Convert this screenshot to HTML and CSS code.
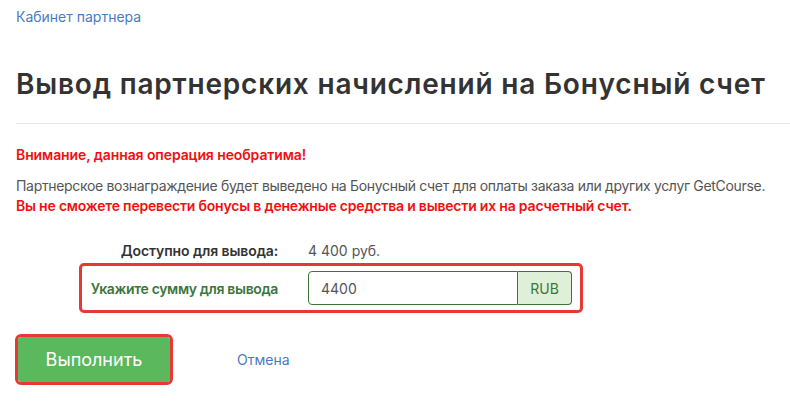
FILE: index.html
```html
<!DOCTYPE html>
<html lang="ru">
<head>
<meta charset="utf-8">
<link rel="stylesheet" href="styles.css">
</head>
<body>
<div class="page">
  <div class="crumbs"><a href="#">Кабинет партнера</a></div>
  <h1 class="title">Вывод партнерских начислений на Бонусный счет</h1>
  <hr class="sep">
  <p class="warn">Внимание, данная операция необратима!</p>
  <p class="info">Партнерское вознаграждение будет выведено на Бонусный счет для оплаты заказа или других услуг GetCourse.<br><span class="warn-inline">Вы не сможете перевести бонусы в денежные средства и вывести их на расчетный счет.</span></p>
  <div class="form">
    <div class="row avail">
      <div class="lbl">Доступно для вывода:</div>
      <div class="val">4 400 руб.</div>
    </div>
    <div class="box">
      <div class="row">
        <div class="lbl success">Укажите сумму для вывода</div>
        <div class="group">
          <input class="amount" type="text" value="4400">
          <span class="addon">RUB</span>
        </div>
      </div>
    </div>
  </div>
  <div class="actions">
    <div class="btn-outline"><button class="btn">Выполнить</button></div>
    <a class="cancel" href="#">Отмена</a>
  </div>
</div>
</body>
</html>
```
FILE: styles.css
```css
* { box-sizing: border-box; }
html, body { margin: 0; padding: 0; background: #fff; overflow: hidden; }
body { font-family: Inter, "Noto Sans", sans-serif; color: #555; font-size: 14px; }
.page { padding: 8px 0 0 16px; }
.crumbs { line-height: 18px; height: 18px; }
.crumbs a { color: #4a7ac4; text-decoration: none; font-size: 14px; }
.title { margin: 38px 0 0 0; font-size: 28px; font-weight: 600; color: #333; line-height: 40px; letter-spacing: 0.8px; white-space: nowrap; }
.sep { border: 0; border-top: 1px solid #e6e6e6; margin: 19px 0 0 0; }
.warn { margin: 21px 0 0 0; color: #ee1111; font-weight: 600; line-height: 20px; letter-spacing: -0.1px; }
.info { margin: 11px 0 0 0; line-height: 20px; color: #555; white-space: nowrap; letter-spacing: -0.32px; }
.warn-inline { color: #ee1111; font-weight: 600; letter-spacing: -0.2px; }
.form { margin: 25px 0 0 63px; }
.row { display: flex; align-items: center; }
.avail { padding-left: 11px; height: 20px; line-height: 20px; }
.lbl { width: 218px; padding-right: 30px; text-align: right; font-weight: 600; color: #333; white-space: nowrap; letter-spacing: -0.1px; }
.val { color: #555; }
.box { margin-top: 2px; width: 504px; border: 3px solid #e53935; border-radius: 5px; padding: 5px 8px; }
.success { color: #3c763d; width: 218px; letter-spacing: -0.35px; }
.group { display: flex; width: 264px; height: 34px; }
.amount { flex: 1; min-width: 0; height: 34px; border: 1px solid #3c763d; border-radius: 4px 0 0 4px; padding: 0 12px; font: inherit; font-size: 14px; color: #555; outline: none; }
.addon { width: 54px; height: 34px; border: 1px solid #3c763d; border-left: 0; border-radius: 0 4px 4px 0; background: #dff0d8; color: #3c763d; display: flex; align-items: center; justify-content: center; }
.actions { display: flex; align-items: center; margin: 21px 0 0 -1px; }
.btn-outline { border: 3px solid #e53935; border-radius: 6px; }
.btn { display: block; width: 152px; height: 45px; background: #5cb85c; border: 0; border-radius: 3px; color: #fff; font: inherit; font-size: 18px; padding: 0; }
.cancel { margin-left: 64px; color: #4a7ac4; text-decoration: none; font-size: 14px; }
```
